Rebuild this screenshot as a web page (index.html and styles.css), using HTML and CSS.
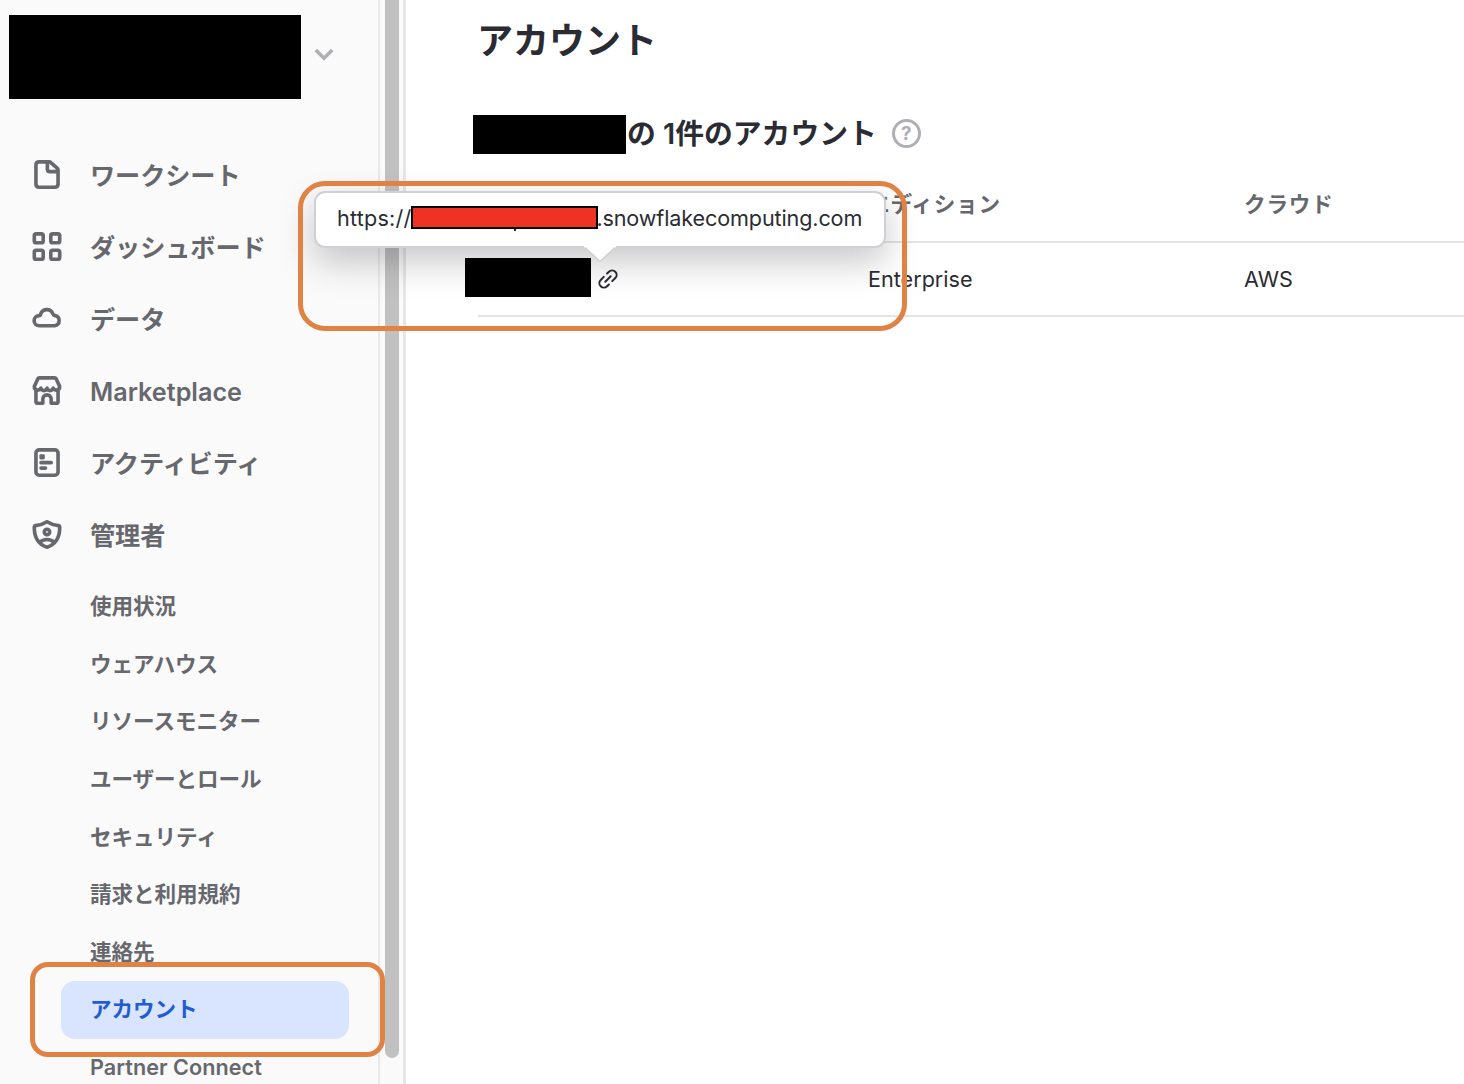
FILE: index.html
```html
<!DOCTYPE html>
<html lang="ja">
  <head>
    <meta charset="utf-8" />
    <meta name="viewport" content="width=device-width, initial-scale=1.0" />
    <title>アカウント</title>
    <link rel="stylesheet" href="styles.css">
  </head>
  <body>
    <aside class="sidebar">
      <div class="profile">
        <div class="redacted profile-name"></div>
        <svg class="chevron" viewBox="0 0 20 14"><path d="M1.800 2l8.200 8.200L18.200 2" /></svg>
      </div>

      <nav class="nav">
        <a class="nav-item">
          <svg class="icon" viewBox="0 0 16 16"><path d="M3.700 1h5.400c.4 0 .7.100 1 .4l3.500 3.100c.3.300.5.600.5 1v7.700c0 1.100-.7 1.800-1.800 1.800H3.700c-1.100 0-1.800-.7-1.800-1.800V2.800C1.900 1.700 2.600 1 3.700 1zM8.200 1v3.900c0 1 .5 1.500 1.500 1.500h4.200" /></svg>
          <span>ワークシート</span>
        </a>
        <a class="nav-item">
          <svg class="icon" viewBox="0 0 16 16"><rect x="1" y="1" width="4.900" height="4.900" rx="1" /><rect x="10.100" y="1" width="4.900" height="4.900" rx="1" /><rect x="1" y="10.100" width="4.900" height="4.900" rx="1" /><rect x="10.100" y="10.100" width="4.900" height="4.900" rx="1" /></svg>
          <span>ダッシュボード</span>
        </a>
        <a class="nav-item">
          <svg class="icon" viewBox="0 0 16 16"><path d="M3.700 12h8.500a2.850 2.850 0 0 0 .3-5.600c-.7-.1-1-.3-1.200-.9A3.600 3.600 0 0 0 4.500 5.500c0 .5-.3.800-.8.900a2.800 2.800 0 0 0 0 5.600z" /></svg>
          <span>データ</span>
        </a>
        <a class="nav-item">
          <svg class="icon" viewBox="0 0 16 16"><path d="M3.800 1h8.400c.4 0 .7.200.9.600l1.900 4.200a1.900 1.900 0 0 1-3.600.9 1.750 1.750 0 0 1-3.400 0 1.750 1.750 0 0 1-3.400 0A1.900 1.900 0 0 1 1 5.800l1.900-4.200c.2-.4.500-.6.900-.6zM1.900 8v6c0 .6.400 1 1 1h2.800v-2.300a2.300 2.300 0 0 1 4.600 0V15h2.800c.6 0 1-.4 1-1V8" /></svg>
          <span lang="en">Marketplace</span>
        </a>
        <a class="nav-item">
          <svg class="icon" viewBox="0 0 16 16"><rect x="1.900" y="1" width="12.200" height="14" rx="1.800" /><path d="M4.700 8.100h5.600M4.700 11.100h2.500" stroke-linecap="round" /><rect class="fill" x="3.800" y="3.400" width="3" height="2.900" rx=".8" /></svg>
          <span>アクティビティ</span>
        </a>
        <a class="nav-item">
          <svg class="icon" viewBox="0 0 16 16"><path d="M8 1c2 1.300 4.300 1.900 6.300 2.100.4.100.7.300.7.700.1 4.400-1.300 9.300-7 11.200C2.300 13.100.9 8.200 1 3.800c0-.4.300-.6.700-.7C3.700 2.900 6 2.300 8 1z" /><circle cx="8" cy="6.600" r="1.500" /><path d="M3.700 12.500c2.300-2.300 6.300-2.300 8.600 0" /></svg>
          <span>管理者</span>
        </a>
      </nav>

      <nav class="subnav">
        <a class="subnav-item">使用状況</a>
        <a class="subnav-item">ウェアハウス</a>
        <a class="subnav-item">リソースモニター</a>
        <a class="subnav-item">ユーザーとロール</a>
        <a class="subnav-item">セキュリティ</a>
        <a class="subnav-item">請求と利用規約</a>
        <a class="subnav-item">連絡先</a>
        <a class="subnav-item active">アカウント</a>
        <a class="subnav-item" lang="en">Partner Connect</a>
      </nav>
    </aside>

    <div class="scrollbar"><div class="thumb"></div></div>

    <main class="content">
      <h1 class="title">アカウント</h1>
      <div class="summary">
        <div class="redacted org-name"></div>
        <h2 class="subtitle">の 1件のアカウント</h2>
        <span class="help">?</span>
      </div>

      <div class="table">
        <div class="row head">
          <span></span>
          <span>エディション</span>
          <span>クラウド</span>
        </div>
        <div class="row">
          <div class="account">
            <div class="redacted account-name"></div>
            <svg class="link" viewBox="0 0 22 22"><g transform="rotate(-45 11 11)"><path d="M9.500 6.500H5.200a4.500 4.500 0 0 0 0 9h2.600M12.500 15.500h4.300a4.500 4.500 0 0 0 0-9h-2.600M7.200 11h7.600" /></g></svg>
          </div>
          <span>Enterprise</span>
          <span>AWS</span>
        </div>
      </div>
    </main>

    <!-- Account URL tooltip -->
    <div class="tooltip">
      <span class="scheme">https://</span><span class="masked"></span><span class="host">.snowflakecomputing.com</span>
      <svg class="arrow" viewBox="0 0 32 17"><path class="arrow-bg" d="M0 0h32v1.500h-1L16 15.500 1 1.500H0z" /><path class="arrow-line" d="M1 1.500L15.200 14.700q.8.600 1.600 0L31 1.500" /></svg>
    </div>

    <!-- Highlights -->
    <div class="highlight highlight-url"></div>
    <div class="highlight highlight-menu"></div>
  </body>
</html>
```
FILE: styles.css
```css
body,
html {
  height: 100%;
  margin: 0;
  overflow: hidden;
}

body {
  position: relative;
  display: flex;
  box-sizing: border-box;
  background-color: #fff;
  color: #2b2c33;
  font-family: Inter, "Noto Sans CJK JP", sans-serif;
  font-size: 21.6px;
}

.redacted {
  background-color: #000;
  flex-shrink: 0;
}

.sidebar {
  box-sizing: border-box;
  width: 380px;
  flex-shrink: 0;
  padding-top: 15px;
  background-color: #fafafa;
  border-right: 2px solid #e9e9ea;
  color: #67686e;
}

.profile {
  display: flex;
  align-items: center;
  gap: 13px;
  padding-left: 9px;
  height: 84px;
}

.profile-name {
  width: 292px;
  height: 84px;
}

.chevron {
  width: 20px;
  height: 14px;
  margin-top: -4px;
  fill: none;
  stroke: #afb0b4;
  stroke-width: 3.6;
}

.nav {
  padding-top: 40px;
}

.nav-item {
  display: flex;
  align-items: center;
  gap: 29px;
  height: 72px;
  padding-left: 32px;
  font-size: 25.2px;
  font-weight: 600;
  letter-spacing: -0.1px;
}

.nav-item span {
  padding-bottom: 3px;
}

.nav-item span:lang(en) {
  padding: 2px 0 0;
  letter-spacing: 0;
}

.icon {
  width: 30px;
  height: 29px;
  margin-top: -1px;
  margin-right: -1px;
  fill: none;
  stroke: #67686e;
  stroke-width: 2;
  stroke-linejoin: round;
}

.icon .fill {
  fill: #67686e;
  stroke: none;
}

.subnav {
  padding: 7px 29px 0 61px;
}

.subnav-item {
  display: flex;
  align-items: center;
  box-sizing: border-box;
  height: 57.6px;
  padding: 0 0 4px 29px;
  border-radius: 14px;
  font-weight: 600;
  letter-spacing: -0.1px;
}

.subnav-item:lang(en) {
  padding-bottom: 2px;
  letter-spacing: 0.05px;
}

.subnav-item.active {
  background-color: #d9e5ff;
  color: #1f5cd6;
}

.scrollbar {
  box-sizing: border-box;
  width: 26px;
  flex-shrink: 0;
  padding-left: 5px;
  background-color: #fafafa;
  border-right: 3px solid #e6e6e7;
}

.thumb {
  width: 14px;
  height: 1058px;
  border-radius: 0 0 7px 7px;
  background-color: #c1c1c1;
}

.content {
  flex-grow: 1;
  min-width: 0;
}

.title {
  margin: 0;
  padding-left: 71px;
  font-size: 36px;
  line-height: 82px;
  font-weight: 600;
}

.summary {
  display: flex;
  align-items: center;
  height: 39px;
  margin-top: 33px;
  padding-left: 67px;
}

.org-name {
  width: 153px;
  height: 39px;
}

.subtitle {
  margin: -2px 15px 0 1px;
  font-size: 28.8px;
  line-height: 39px;
  font-weight: 600;
}

.help {
  box-sizing: border-box;
  width: 29px;
  height: 29px;
  margin-top: -2px;
  border: 3px solid #afb0b4;
  border-radius: 50%;
  color: #afb0b4;
  font-size: 19px;
  line-height: 23px;
  font-weight: 700;
  text-align: center;
}

.table {
  margin-left: 72px;
  padding-top: 13px;
}

.row {
  display: grid;
  grid-template-columns: 390px 376px 1fr;
  align-items: center;
  height: 72px;
  border-bottom: 2px solid #e4e4e5;
}

.row.head {
  box-sizing: border-box;
  height: 76px;
  padding-bottom: 4px;
  color: #67686e;
  font-weight: 600;
  letter-spacing: 0.8px;
}

.account {
  display: flex;
  align-items: center;
  gap: 6px;
  margin-left: -13px;
}

.account-name {
  width: 126px;
  height: 39px;
  margin-top: -3px;
}

.link {
  width: 22px;
  height: 22px;
  fill: none;
  stroke: #2b2c33;
  stroke-width: 2;
  stroke-linecap: round;
}

.tooltip {
  position: absolute;
  left: 314px;
  top: 191px;
  box-sizing: border-box;
  display: flex;
  align-items: center;
  width: 572px;
  height: 57px;
  padding: 0 0 3px 21px;
  background-color: #fff;
  border: 2px solid #cfd0d5;
  border-radius: 11px;
  box-shadow: 0 14px 36px rgba(0, 0, 0, 0.22);
}

.scheme {
  letter-spacing: 0.2px;
}

.masked {
  position: relative;
  box-sizing: border-box;
  width: 187px;
  height: 23px;
  margin-top: -1px;
  background-color: #ee3224;
  border: 2px solid #000;
}

/* descender left visible under the mask */
.masked::after {
  content: "";
  position: absolute;
  left: 101px;
  bottom: -4px;
  width: 2px;
  height: 2px;
  background-color: #2b2c33;
}

.host {
  margin-left: -2px;
  letter-spacing: -0.13px;
}

.arrow {
  position: absolute;
  left: 268px;
  top: 53px;
  width: 32px;
  height: 17px;
}

.arrow-bg {
  fill: #fff;
}

.arrow-line {
  fill: none;
  stroke: #cfd0d5;
  stroke-width: 1.5;
}

.highlight {
  position: absolute;
  box-sizing: border-box;
  border: 5px solid #e08244;
}

.highlight-url {
  left: 298px;
  top: 181px;
  width: 609px;
  height: 150px;
  border-radius: 27px;
}

.highlight-menu {
  left: 30px;
  top: 962px;
  width: 355px;
  height: 95px;
  border-radius: 18px;
}
```
